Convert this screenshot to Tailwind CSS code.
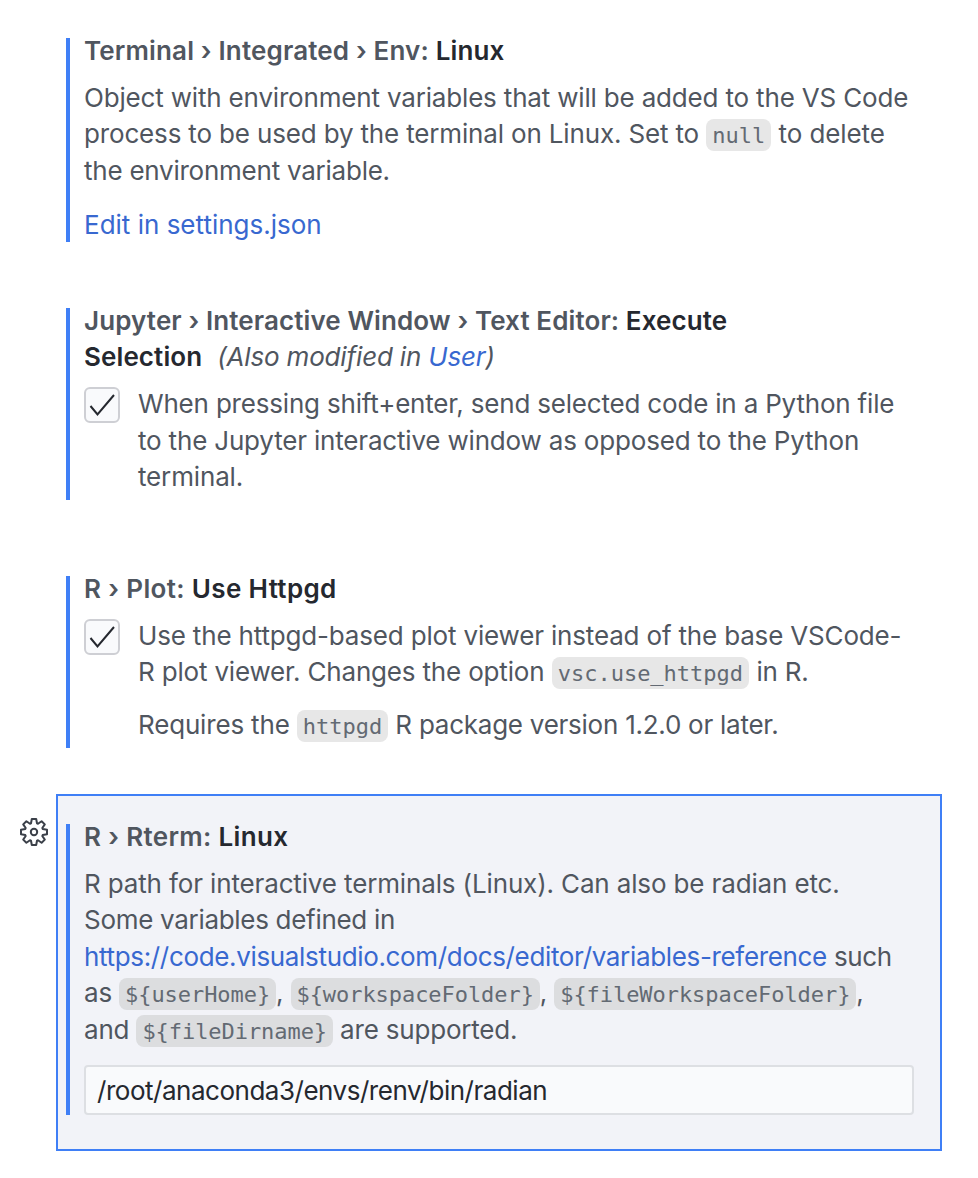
<!DOCTYPE html>
<html lang="en">
<head>
<meta charset="utf-8">
<title>Settings</title>
<script src="https://cdn.jsdelivr.net/npm/@tailwindcss/browser@4"></script>
</head>
<body class="w-[978px] h-[1178px] bg-white overflow-hidden font-['Inter',sans-serif] text-[26px] leading-[36.4px] text-[#50565f]">
<main class="flex flex-col pt-[38px] whitespace-nowrap">
  <section class="ml-[66px] flex flex-col h-[204px] border-l-4 border-[#3f7ff6] pl-[14px]">
    <h2 class="-mt-[5px] font-semibold leading-9 tracking-[0.15px]">Terminal › Integrated › Env: <span class="text-[#25282f]">Linux</span></h2>
    <p class="mt-[11px]"><span class="tracking-[-0.175px]">Object with environment variables that will be added to the VS Code</span><br><span class="tracking-[-0.16px]">process to be used by the terminal on Linux. Set to</span> <code class="rounded-lg bg-[#e7e7e7] px-1.5 pt-1 pb-[3px] font-['DejaVu_Sans_Mono',monospace] text-[22px] leading-0 text-[#636a73]">null</code> <span class="tracking-[-0.1px]">to delete</span><br><span class="tracking-[-0.24px]">the environment variable.</span></p>
    <a class="mt-[18px] text-[#3868d0]">Edit in settings.json</a>
  </section>
  <section class="ml-[66px] mt-[66px] flex flex-col h-[192px] border-l-4 border-[#3f7ff6] pl-[14px]">
    <h2 class="-mt-[5px] font-semibold leading-9 tracking-[0.1px]">Jupyter › Interactive Window › Text Editor: <span class="text-[#25282f]">Execute</span><br><span class="text-[#25282f]">Selection</span><span class="ml-[15px] font-normal italic tracking-[-0.17px]">(Also modified in <span class="text-[#3868d0]">User</span>)</span></h2>
    <div class="mt-[11px] flex">
      <span class="mt-px flex size-9 items-center justify-center rounded-md border-2 border-[#cecfd4] bg-[#f9fafc]"><svg class="size-8 shrink-0" viewBox="0 0 32 32" fill="none" stroke="#25282f" stroke-width="2"><path d="M4.5 17 11.5 25.5 28 6"/></svg></span>
      <p class="ml-[18px] pt-[0.3px]"><span class="tracking-[-0.19px]">When pressing shift+enter, send selected code in a Python file</span><br><span class="tracking-[-0.18px]">to the Jupyter interactive window as opposed to the Python</span><br><span class="tracking-[-0.15px]">terminal.</span></p>
    </div>
  </section>
  <section class="ml-[66px] mt-[76px] flex flex-col h-[172px] border-l-4 border-[#3f7ff6] pl-[14px]">
    <h2 class="-mt-[5px] font-semibold leading-9 tracking-[0.35px]">R › Plot: <span class="text-[#25282f]">Use Httpgd</span></h2>
    <div class="mt-[11px] flex">
      <span class="mt-px flex size-9 items-center justify-center rounded-md border-2 border-[#cecfd4] bg-[#f9fafc]"><svg class="size-8 shrink-0" viewBox="0 0 32 32" fill="none" stroke="#25282f" stroke-width="2"><path d="M4.5 17 11.5 25.5 28 6"/></svg></span>
      <div class="ml-[18px]">
        <p><span class="tracking-[-0.17px]">Use the httpgd-based plot viewer instead of the base VSCode-</span><br><span class="tracking-[-0.18px]">R plot viewer. Changes the option</span> <code class="rounded-lg bg-[#e7e7e7] px-1.5 pt-1 pb-[3px] font-['DejaVu_Sans_Mono',monospace] text-[22px] leading-0 text-[#636a73]">vsc.use_httpgd</code> <span class="tracking-[-0.2px]">in R.</span></p>
        <p class="mt-4 tracking-[-0.17px]">Requires the <code class="rounded-lg bg-[#e7e7e7] px-1.5 pt-1 pb-[3px] font-['DejaVu_Sans_Mono',monospace] text-[22px] leading-0 tracking-normal text-[#636a73]">httpgd</code><span class="tracking-[-0.25px]"> R package version 1.2.0 or later.</span></p>
      </div>
    </div>
  </section>
  <div class="mt-[46px] flex items-start">
    <svg class="ml-[19px] mt-[23px] mr-[7px] size-[30px] shrink-0" viewBox="0 0 30 30" fill="none" stroke="#3b4049" stroke-width="2" stroke-linejoin="round"><path d="M12.8 2h4.4l.8 4.3 1 .4 3.6-2.5 3.2 3.2-2.5 3.6.4 1 4.3.8v4.4l-4.3.8-.4 1 2.5 3.6-3.2 3.2-3.6-2.5-1 .4-.8 4.3h-4.4l-.8-4.3-1-.4-3.6 2.5-3.2-3.2 2.5-3.6-.4-1-4.3-.8v-4.4l4.3-.8.4-1-2.5-3.6 3.2-3.2 3.6 2.5 1-.4z"/><circle cx="15" cy="15" r="3.2"/></svg>
    <section class="h-[357px] w-[886px] border-2 border-[#3f7ff6] bg-[#f2f3f8] pl-2 pt-7">
      <div class="flex h-[291px] flex-col border-l-4 border-[#3f7ff6] pl-[14px]">
        <h2 class="-mt-[5px] font-semibold leading-9 tracking-[0.33px]">R › Rterm: <span class="text-[#25282f]">Linux</span></h2>
        <p class="mt-[11px]"><span class="tracking-[-0.14px]">R path for interactive terminals (Linux). Can also be radian etc.</span><br><span class="tracking-[-0.3px]">Some variables defined in</span><br><span class="tracking-[-0.34px]"><a class="text-[#3868d0]">https://code.visualstudio.com/docs/editor/variables-reference</a> such</span><br><span class="tracking-[-0.2px]">as <code class="rounded-lg bg-[#dcdddf] px-1.5 pt-1 pb-[3px] font-['DejaVu_Sans_Mono',monospace] text-[22px] leading-0 tracking-[-0.06px] text-[#636a73]">${userHome}</code>, <code class="rounded-lg bg-[#dcdddf] px-1.5 pt-1 pb-[3px] font-['DejaVu_Sans_Mono',monospace] text-[22px] leading-0 tracking-[-0.06px] text-[#636a73]">${workspaceFolder}</code>, <code class="rounded-lg bg-[#dcdddf] px-1.5 pt-1 pb-[3px] font-['DejaVu_Sans_Mono',monospace] text-[22px] leading-0 tracking-[-0.06px] text-[#636a73]">${fileWorkspaceFolder}</code>,<br>and <code class="rounded-lg bg-[#dcdddf] px-1.5 pt-1 pb-[3px] font-['DejaVu_Sans_Mono',monospace] text-[22px] leading-0 tracking-[-0.06px] text-[#636a73]">${fileDirname}</code> are supported.</span></p>
        <div class="mt-[17px] flex h-[50px] w-[830px] items-center rounded border-2 border-[#dddfe3] bg-[#f9fafc] pl-[11px] pt-0.5 tracking-[-0.48px] text-[#25282f]">/root/anaconda3/envs/renv/bin/radian</div>
      </div>
    </section>
  </div>
</main>
</body>
</html>
